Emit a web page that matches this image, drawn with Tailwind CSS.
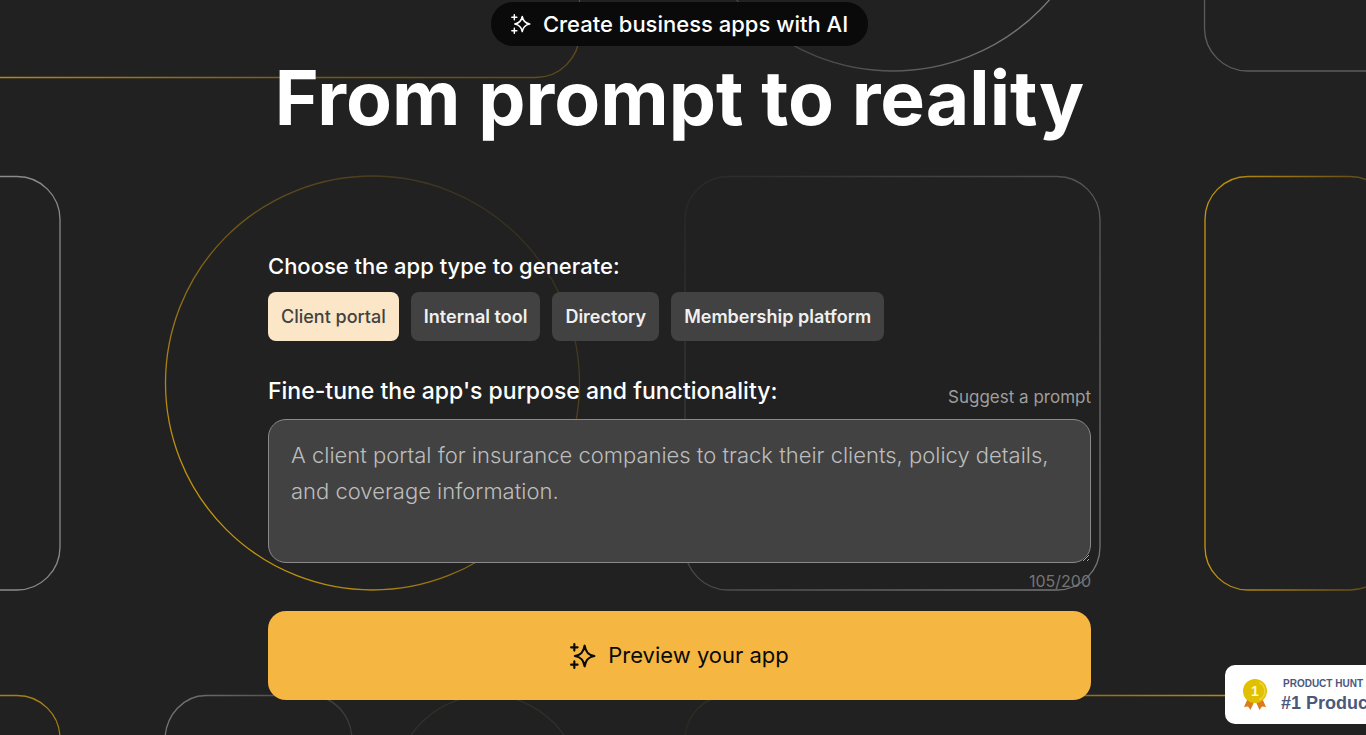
<!DOCTYPE html>
<html lang="en">
<head>
  <meta charset="UTF-8" />
  <meta name="viewport" content="width=device-width, initial-scale=1.0" />
  <title>Create business apps with AI</title>
  <script src="https://cdn.jsdelivr.net/npm/@tailwindcss/browser@4"></script>
</head>
<body class="bg-[#212121] text-white font-[Inter,sans-serif] overflow-hidden">

  <div class="relative min-h-screen overflow-hidden">

    <!-- Background shapes -->
    <svg class="absolute inset-0 w-full h-full" viewBox="0 0 1366 735" preserveAspectRatio="xMidYMin slice" fill="none" stroke-width="1.3" aria-hidden="true">
      <defs>
        <linearGradient id="goldTop" gradientUnits="userSpaceOnUse" x1="0" y1="0" x2="620" y2="0">
          <stop offset="0" stop-color="#b58a10" />
          <stop offset="0.5" stop-color="#74591a" />
          <stop offset="1" stop-color="#5c481b" />
        </linearGradient>
        <linearGradient id="goldCircle" gradientUnits="userSpaceOnUse" x1="220" y1="520" x2="520" y2="230">
          <stop offset="0" stop-color="#c4960c" />
          <stop offset="0.5" stop-color="#705719" />
          <stop offset="1" stop-color="#383120" />
        </linearGradient>
        <linearGradient id="grayRect" gradientUnits="userSpaceOnUse" x1="1100" y1="500" x2="700" y2="200">
          <stop offset="0" stop-color="#737373" />
          <stop offset="0.6" stop-color="#444444" />
          <stop offset="1" stop-color="#2a2a2a" />
        </linearGradient>
        <linearGradient id="goldRight" gradientUnits="userSpaceOnUse" x1="1205" y1="0" x2="1385" y2="0">
          <stop offset="0" stop-color="#c4960c" />
          <stop offset="0.4" stop-color="#9c7712" />
          <stop offset="1" stop-color="#50401c" />
        </linearGradient>
        <linearGradient id="grayBottom" gradientUnits="userSpaceOnUse" x1="165" y1="0" x2="352" y2="0">
          <stop offset="0" stop-color="#757575" />
          <stop offset="1" stop-color="#3a3a3a" />
        </linearGradient>
        <linearGradient id="goldBottom" gradientUnits="userSpaceOnUse" x1="685" y1="0" x2="1225" y2="0">
          <stop offset="0" stop-color="#2c2a20" />
          <stop offset="1" stop-color="#b58a10" />
        </linearGradient>
        <linearGradient id="grayCircle" gradientUnits="userSpaceOnUse" x1="790" y1="40" x2="1050" y2="0">
          <stop offset="0" stop-color="#444444" />
          <stop offset="1" stop-color="#7c7c7c" />
        </linearGradient>
      </defs>
      <path d="M0 77.500H535A44 44 0 0 0 579.500 33V0" stroke="url(#goldTop)" />
      <circle cx="893" cy="-136.500" r="207.500" stroke="url(#grayCircle)" />
      <path d="M1204.500 0V28A43 43 0 0 0 1247.500 71H1366" stroke="#5c5c5c" />
      <path d="M0 176.500H17A43 43 0 0 1 60 219.500V547A43 43 0 0 1 17 590H0" stroke="#8a8a8a" />
      <circle cx="372.500" cy="383" r="207" stroke="url(#goldCircle)" />
      <rect x="685" y="176.500" width="415" height="413.500" rx="43" stroke="url(#grayRect)" />
      <rect x="1205" y="176.500" width="188" height="413.500" rx="43" stroke="url(#goldRight)" />
      <path d="M0 695.500H17A43 43 0 0 1 60 738.500" stroke="#a67f10" />
      <path d="M165 740A41 45 0 0 1 206 695.500H311A41 45 0 0 1 352 740" stroke="url(#grayBottom)" />
      <circle cx="487.500" cy="788" r="93" stroke="#31302a" />
      <path d="M685 740A43 45 0 0 1 728 695.500H1366" stroke="url(#goldBottom)" />
    </svg>

    <!-- Hero -->
    <main class="relative flex flex-col items-center pt-0.5 pr-[7px]">
      <div class="flex items-center gap-3 h-11 px-5 rounded-full bg-[#0a0a0a] text-[22px] font-medium">
        <svg class="size-5" viewBox="0 0 24 24" fill="none" stroke="currentColor" stroke-width="1.800" stroke-linejoin="round" stroke-linecap="round" aria-hidden="true">
          <path d="M13.500 3C14.500 8.500 17 11 22.500 12C17 13 14.500 15.500 13.500 21C12.500 15.500 10 13 4.500 12C10 11 12.500 8.500 13.500 3Z" />
          <path d="M4 1V7M1 4H7M4 17V23M1 20H7" />
        </svg>
        <span>Create business apps with AI</span>
      </div>

      <h1 class="mt-1 text-[75px] leading-[96px] font-bold whitespace-nowrap">From prompt to reality</h1>

      <form class="mt-[102px] w-full max-w-[823px]">
        <fieldset>
          <legend class="text-[22px] leading-9 font-medium">Choose the app type to generate:</legend>
          <div class="mt-2 flex gap-3 text-lg">
            <button type="button" class="h-[49px] px-[13px] rounded-lg bg-[#fce6c8] text-[#424242] font-medium" aria-pressed="true">Client portal</button>
            <button type="button" class="h-[49px] px-[13px] rounded-lg bg-[#424242] text-[#f0f0f0] font-semibold">Internal tool</button>
            <button type="button" class="h-[49px] px-[13px] rounded-lg bg-[#424242] text-[#f0f0f0] font-semibold">Directory</button>
            <button type="button" class="h-[49px] px-[13px] rounded-lg bg-[#424242] text-[#f0f0f0] font-semibold">Membership platform</button>
          </div>
        </fieldset>

        <div class="mt-8 flex items-end justify-between">
          <label for="prompt" class="pb-2 text-[23px] leading-9 font-medium">Fine-tune the app's purpose and functionality:</label>
          <button type="button" class="pb-2 text-[17px] leading-6 text-[#9e9e9e]">Suggest a prompt</button>
        </div>
        <textarea id="prompt" maxlength="200" spellcheck="false" class="block w-full h-36 mt-0.5 px-[22px] py-[17px] rounded-[18px] border border-[#8a8a8a] bg-[#424242] text-[22px] leading-9 font-light text-[#bdbdbd] resize">A client portal for insurance companies to track their clients, policy details, and coverage information.</textarea>
        <p class="mt-1.5 text-right text-base text-[#757575]">105/200</p>

        <button type="submit" class="mt-[18px] flex w-full h-[89px] items-center justify-center gap-3 rounded-[18px] bg-[#f5b642] text-[22px] text-[#0a0a0a]">
          <svg class="size-[26px]" viewBox="0 0 24 24" fill="none" stroke="currentColor" stroke-width="2" stroke-linejoin="round" stroke-linecap="round" aria-hidden="true">
            <path d="M13.500 2.500C14.500 8.500 17 11 22.500 12C17 13 14.500 15.500 13.500 21.500C12.500 15.500 10 13 4.500 12C10 11 12.500 8.500 13.500 2.500Z" />
            <path d="M4 1V7M1 4H7M4 17V23M1 20H7" />
          </svg>
          <span>Preview your app</span>
        </button>
      </form>
    </main>

    <!-- Product Hunt badge -->
    <a href="#" class="absolute right-[-109px] bottom-[11px] flex w-[250px] h-[59px] items-center gap-3.5 pl-[18px] rounded-[10px] bg-white text-[#4b587c] font-['Liberation_Sans',sans-serif] font-bold whitespace-nowrap">
      <svg class="w-6 h-8" viewBox="0 0 24 32" aria-hidden="true">
        <path d="M5 19L1 28L5 27.500L7.500 31L12 21L16.500 31L19 27.500L23 28L19 19Z" fill="#dc7b1d" />
        <circle cx="12" cy="12" r="12" fill="#e0c000" />
        <path d="M16.500 3.500A9.500 9.500 0 0 1 16.500 20.500" fill="none" stroke="#eed53c" stroke-width="1.500" />
        <text x="12" y="17" text-anchor="middle" font-size="14" fill="#fff8cf">1</text>
      </svg>
      <span class="flex flex-col pt-0.5">
        <span class="pl-0.5 text-[10px] leading-[14px]">PRODUCT HUNT</span>
        <span class="text-lg leading-6">#1 Product of the Day</span>
      </span>
    </a>
  </div>

</body>
</html>
